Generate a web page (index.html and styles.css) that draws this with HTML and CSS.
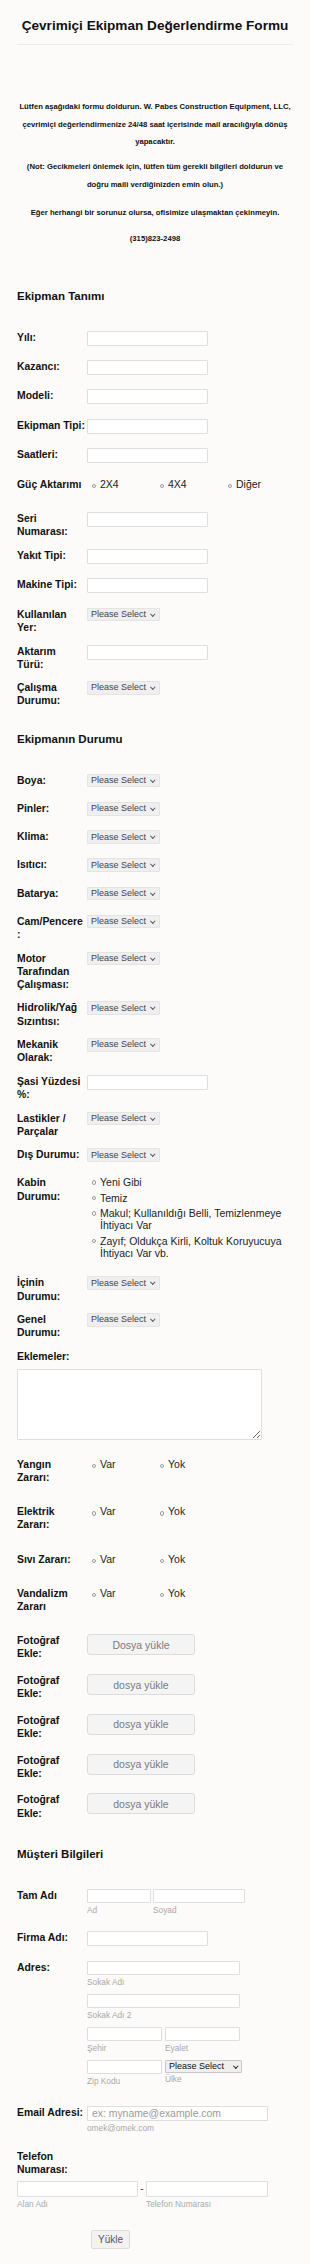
FILE: index.html
```html
<!DOCTYPE html>
<html lang="tr">
<head>
<meta charset="utf-8">
<title>Çevrimiçi Ekipman Değerlendirme Formu</title>
<link rel="stylesheet" href="styles.css">
</head>
<body>
<form class="form">
  <header class="form-header">
    <h1>Çevrimiçi Ekipman Değerlendirme Formu</h1>
  </header>

  <div class="intro">
    <p>Lütfen aşağıdaki formu doldurun. W. Pabes Construction Equipment, LLC, çevrimiçi değerlendirmenize 24/48 saat içerisinde mail aracılığıyla dönüş yapacaktır.</p>
    <p class="note">(Not: Gecikmeleri önlemek için, lütfen tüm gerekli bilgileri doldurun ve doğru maili verdiğinizden emin olun.)</p>
    <p class="contact">Eğer herhangi bir sorunuz olursa, ofisimize ulaşmaktan çekinmeyin.</p>
    <p class="phone">(315)823-2498</p>
  </div>

  <h2 class="section-title">Ekipman Tanımı</h2>

  <div class="row"><label class="lbl">Yılı:</label><div class="field"><input class="txt" type="text"></div></div>
  <div class="row"><label class="lbl">Kazancı:</label><div class="field"><input class="txt" type="text"></div></div>
  <div class="row"><label class="lbl">Modeli:</label><div class="field"><input class="txt" type="text"></div></div>
  <div class="row"><label class="lbl">Ekipman Tipi:</label><div class="field"><input class="txt" type="text"></div></div>
  <div class="row"><label class="lbl">Saatleri:</label><div class="field"><input class="txt" type="text"></div></div>
  <div class="row row-radio"><label class="lbl">Güç Aktarımı</label>
    <div class="radios radios-3">
      <label class="opt"><input class="rad" type="radio" name="guc"><span>2X4</span></label>
      <label class="opt"><input class="rad" type="radio" name="guc"><span>4X4</span></label>
      <label class="opt"><input class="rad" type="radio" name="guc"><span>Diğer</span></label>
    </div>
  </div>
  <div class="row"><label class="lbl">Seri Numarası:</label><div class="field"><input class="txt" type="text"></div></div>
  <div class="row"><label class="lbl">Yakıt Tipi:</label><div class="field"><input class="txt" type="text"></div></div>
  <div class="row"><label class="lbl">Makine Tipi:</label><div class="field"><input class="txt" type="text"></div></div>
  <div class="row"><label class="lbl">Kullanılan Yer:</label><div class="field"><span class="sel-wrap"><select class="sel"><option>Please Select</option></select></span></div></div>
  <div class="row"><label class="lbl">Aktarım<br>Türü:</label><div class="field"><input class="txt" type="text"></div></div>
  <div class="row"><label class="lbl">Çalışma Durumu:</label><div class="field"><span class="sel-wrap"><select class="sel"><option>Please Select</option></select></span></div></div>

  <h2 class="section-title">Ekipmanın Durumu</h2>

  <div class="row"><label class="lbl">Boya:</label><div class="field"><span class="sel-wrap"><select class="sel"><option>Please Select</option></select></span></div></div>
  <div class="row"><label class="lbl">Pinler:</label><div class="field"><span class="sel-wrap"><select class="sel"><option>Please Select</option></select></span></div></div>
  <div class="row"><label class="lbl">Klima:</label><div class="field"><span class="sel-wrap"><select class="sel"><option>Please Select</option></select></span></div></div>
  <div class="row"><label class="lbl">Isıtıcı:</label><div class="field"><span class="sel-wrap"><select class="sel"><option>Please Select</option></select></span></div></div>
  <div class="row"><label class="lbl">Batarya:</label><div class="field"><span class="sel-wrap"><select class="sel"><option>Please Select</option></select></span></div></div>
  <div class="row"><label class="lbl">Cam/Pencere<br>:</label><div class="field"><span class="sel-wrap"><select class="sel"><option>Please Select</option></select></span></div></div>
  <div class="row"><label class="lbl">Motor Tarafından Çalışması:</label><div class="field"><span class="sel-wrap"><select class="sel"><option>Please Select</option></select></span></div></div>
  <div class="row"><label class="lbl">Hidrolik/Yağ Sızıntısı:</label><div class="field"><span class="sel-wrap"><select class="sel"><option>Please Select</option></select></span></div></div>
  <div class="row"><label class="lbl">Mekanik Olarak:</label><div class="field"><span class="sel-wrap"><select class="sel"><option>Please Select</option></select></span></div></div>
  <div class="row"><label class="lbl">Şasi Yüzdesi %:</label><div class="field"><input class="txt" type="text"></div></div>
  <div class="row"><label class="lbl">Lastikler / Parçalar</label><div class="field"><span class="sel-wrap"><select class="sel"><option>Please Select</option></select></span></div></div>
  <div class="row"><label class="lbl">Dış Durumu:</label><div class="field"><span class="sel-wrap"><select class="sel"><option>Please Select</option></select></span></div></div>
  <div class="row row-list"><label class="lbl">Kabin Durumu:</label>
    <div class="radio-list">
      <label class="opt"><input class="rad" type="radio" name="kabin"><span>Yeni Gibi</span></label>
      <label class="opt"><input class="rad" type="radio" name="kabin"><span>Temiz</span></label>
      <label class="opt"><input class="rad" type="radio" name="kabin"><span>Makul; Kullanıldığı Belli, Temizlenmeye İhtiyacı Var</span></label>
      <label class="opt"><input class="rad" type="radio" name="kabin"><span>Zayıf; Oldukça Kirli, Koltuk Koruyucuya İhtiyacı Var vb.</span></label>
    </div>
  </div>
  <div class="row"><label class="lbl">İçinin Durumu:</label><div class="field"><span class="sel-wrap"><select class="sel"><option>Please Select</option></select></span></div></div>
  <div class="row"><label class="lbl">Genel Durumu:</label><div class="field"><span class="sel-wrap"><select class="sel"><option>Please Select</option></select></span></div></div>
  <div class="row row-top">
    <label class="lbl lbl-top">Eklemeler:</label>
    <textarea class="area"></textarea>
  </div>
  <div class="row row-radio"><label class="lbl">Yangın Zararı:</label>
    <div class="radios">
      <label class="opt"><input class="rad" type="radio" name="yangin"><span>Var</span></label>
      <label class="opt"><input class="rad" type="radio" name="yangin"><span>Yok</span></label>
    </div>
  </div>
  <div class="row row-radio"><label class="lbl">Elektrik Zararı:</label>
    <div class="radios">
      <label class="opt"><input class="rad" type="radio" name="elektrik"><span>Var</span></label>
      <label class="opt"><input class="rad" type="radio" name="elektrik"><span>Yok</span></label>
    </div>
  </div>
  <div class="row row-radio"><label class="lbl">Sıvı Zararı:</label>
    <div class="radios">
      <label class="opt"><input class="rad" type="radio" name="sivi"><span>Var</span></label>
      <label class="opt"><input class="rad" type="radio" name="sivi"><span>Yok</span></label>
    </div>
  </div>
  <div class="row row-radio"><label class="lbl">Vandalizm Zararı</label>
    <div class="radios">
      <label class="opt"><input class="rad" type="radio" name="vandal"><span>Var</span></label>
      <label class="opt"><input class="rad" type="radio" name="vandal"><span>Yok</span></label>
    </div>
  </div>
  <div class="row"><label class="lbl">Fotoğraf Ekle:</label><div class="field"><button class="upload" type="button">Dosya yükle</button></div></div>
  <div class="row"><label class="lbl">Fotoğraf Ekle:</label><div class="field"><button class="upload" type="button">dosya yükle</button></div></div>
  <div class="row"><label class="lbl">Fotoğraf Ekle:</label><div class="field"><button class="upload" type="button">dosya yükle</button></div></div>
  <div class="row"><label class="lbl">Fotoğraf Ekle:</label><div class="field"><button class="upload" type="button">dosya yükle</button></div></div>
  <div class="row"><label class="lbl">Fotoğraf Ekle:</label><div class="field"><button class="upload" type="button">dosya yükle</button></div></div>

  <h2 class="section-title">Müşteri Bilgileri</h2>

  <div class="row"><label class="lbl">Tam Adı</label>
    <div class="field name-group">
      <span class="sub"><input class="txt txt-first" type="text"><span class="sublbl">Ad</span></span>
      <span class="sub"><input class="txt txt-last" type="text"><span class="sublbl">Soyad</span></span>
    </div>
  </div>
  <div class="row"><label class="lbl">Firma Adı:</label><div class="field"><input class="txt" type="text"></div></div>
  <div class="row"><label class="lbl">Adres:</label>
    <div class="field address">
      <span class="sub addr-line"><input class="txt txt-wide" type="text"><span class="sublbl">Sokak Adı</span></span>
      <span class="sub addr-line"><input class="txt txt-wide" type="text"><span class="sublbl">Sokak Adı 2</span></span>
      <div class="addr-pair">
        <span class="sub addr-line"><input class="txt txt-half" type="text"><span class="sublbl">Şehir</span></span>
        <span class="sub addr-line"><input class="txt txt-half" type="text"><span class="sublbl">Eyalet</span></span>
      </div>
      <div class="addr-pair">
        <span class="sub addr-line"><input class="txt txt-half" type="text"><span class="sublbl">Zip Kodu</span></span>
        <span class="sub addr-line"><span class="sel-wrap sel-wrap-dark"><select class="sel sel-country"><option>Please Select</option></select></span><span class="sublbl sublbl-country">Ülke</span></span>
      </div>
    </div>
  </div>
  <div class="row row-email"><label class="lbl">Email Adresi:</label>
    <div class="field">
      <input class="txt txt-email" type="email" placeholder="ex: myname@example.com">
      <span class="sublbl">omek@omek.com</span>
    </div>
  </div>
  <div class="row row-top row-phone">
    <label class="lbl lbl-top">Telefon Numarası:</label>
    <div class="phone-group">
      <span class="sub"><input class="txt txt-phone" type="text"><span class="sublbl">Alan Adı</span></span>
      <span class="dash">-</span>
      <span class="sub"><input class="txt txt-phone txt-phone2" type="text"><span class="sublbl">Telefon Numarası</span></span>
    </div>
  </div>
  <div class="submit-row"><button class="submit" type="submit">Yükle</button></div>
</form>
</body>
</html>
```

FILE: styles.css
```css
* { box-sizing: border-box; }
html, body { margin: 0; padding: 0; }
body {
  background: #fcfbfa;
  font-family: "Liberation Sans", Arial, Helvetica, sans-serif;
  color: #111;
}
.form { width: 310px; padding: 0 17px 16px; }

.form-header {
  padding: 17px 0 9px;
  border-bottom: 1px solid #ececec;
}
.form-header h1 {
  margin: 0;
  font-size: 13.6px;
  line-height: 18px;
  font-weight: bold;
  text-align: center;
  color: #111;
}

.intro {
  margin: 53px 0 27px;
  text-align: center;
  font-weight: bold;
  font-size: 7.7px;
  line-height: 17.5px;
  color: #111;
}
.intro p { margin: 0; }
.intro .note { margin-top: 7.5px; }
.intro .contact { margin-top: 11px; }
.intro .phone { margin-top: 8.5px; }

.section-title {
  margin: 0;
  padding: 14px 0 28px;
  font-size: 11.5px;
  line-height: 14px;
  font-weight: bold;
  color: #111;
}

.row {
  display: flex;
  align-items: flex-start;
  padding-bottom: 10.3px;
}
.lbl {
  width: 69px;
  margin-right: 1px;
  flex: none;
  font-size: 10.4px;
  line-height: 13.2px;
  font-weight: bold;
  color: #111;
  overflow-wrap: break-word;
}
.field { display: flex; flex-direction: column; align-items: flex-start; }

.txt {
  display: block;
  width: 121px;
  height: 15px;
  margin: 0 0 4.2px;
  padding: 0 3px;
  border: 1px solid #dedede;
  border-radius: 1px;
  background: #fff;
  font-family: inherit;
  font-size: 10.4px;
  color: #333;
}

.sel-wrap { position: relative; display: block; margin-bottom: 4.4px; }
.sel {
  display: block;
  -webkit-appearance: none;
  appearance: none;
  width: 73px;
  height: 13.5px;
  margin: 0;
  padding: 0 0 0 3px;
  border: 1px solid #e4e4e4;
  border-radius: 1px;
  background: #efefef;
  font-family: inherit;
  font-size: 9px;
  line-height: 11px;
  color: #444;
}
.sel-wrap::after {
  content: "";
  position: absolute;
  right: 6px;
  top: 4px;
  width: 2.5px;
  height: 2.5px;
  border-right: 1px solid #555;
  border-bottom: 1px solid #555;
  transform: rotate(45deg);
  pointer-events: none;
}

/* radios */
.row-radio { padding-bottom: 21px; }
.radios { display: grid; grid-template-columns: 68px 68px 68px; }
.opt {
  display: flex;
  align-items: flex-start;
  font-size: 10.5px;
  line-height: 13.2px;
  color: #222;
}
.rad {
  -webkit-appearance: none;
  appearance: none;
  flex: none;
  width: 4.5px;
  height: 4.5px;
  margin: 6px 4px 0 4.5px;
  border: 0.8px solid #9a9a9a;
  border-radius: 50%;
  background: #fff;
}

.row-list { padding-bottom: 14px; }
.radio-list { display: flex; flex-direction: column; width: 200px; }
.radio-list .opt { line-height: 12px; margin-bottom: 3.5px; }
.radio-list .rad { margin-top: 4px; }

/* textarea */
.row-top { flex-direction: column; }
.lbl-top { margin-bottom: 5.5px; }
.area {
  display: block;
  width: 245px;
  height: 71px;
  margin: 0 0 8px;
  border: 1px solid #dedede;
  border-radius: 1px;
  background: #fff;
  font-family: inherit;
}

/* upload */
.upload {
  display: block;
  width: 108px;
  height: 21px;
  margin: 0 0 8.5px;
  padding: 0;
  border: 1px solid #dcdcdc;
  border-radius: 3px;
  background: #f4f4f4;
  font-family: inherit;
  font-size: 10.5px;
  color: #7a7a7a;
}

/* sub-labelled groups */
.sub { display: flex; flex-direction: column; }
.sub .txt { margin-bottom: 0; height: 14px; }
.sublbl {
  display: block;
  margin-top: 2px;
  font-size: 8.3px;
  line-height: 10px;
  color: #a9a9a9;
}
.name-group { flex-direction: row; gap: 2px; padding-bottom: 5.5px; }
.txt-first { width: 64px; }
.txt-last { width: 92px; }

.address { padding-bottom: 3.5px; }
.addr-line { margin-bottom: 7px; }
.txt-wide { width: 153px; }
.addr-pair { display: flex; gap: 3px; }
.txt-half { width: 75px; }
.sel-wrap-dark { margin-bottom: 0; }
.sel-country {
  width: 77px;
  height: 13px;
  border-color: #c8c8c8;
  color: #111;
  font-size: 9px;
}
.sel-wrap-dark::after { border-color: #222; right: 5px; }
.sublbl-country { margin-top: 1px; }

.row-email { padding-bottom: 16.5px; }
.txt-email {
  width: 181px;
  margin-bottom: 0;
  padding: 0 4px;
  font-size: 10.4px;
}
.txt-email::placeholder { color: #9a9a9a; }

.row-phone .lbl-top { margin-bottom: 4.5px; }
.phone-group { display: flex; align-items: flex-start; }
.txt-phone { width: 121px; height: 16px; }
.row-phone .sub .txt { height: 16px; }
.txt-phone2 { width: 122px; }
.dash {
  width: 8px;
  text-align: center;
  font-size: 10px;
  line-height: 16px;
  color: #333;
}

.submit-row { padding: 10.5px 0 0 74px; }
.submit {
  display: block;
  width: 39px;
  height: 19px;
  padding: 0;
  border: 1px solid #dcdcdc;
  border-radius: 2px;
  background: #f2f2f2;
  font-family: inherit;
  font-size: 10px;
  color: #555;
}
```
